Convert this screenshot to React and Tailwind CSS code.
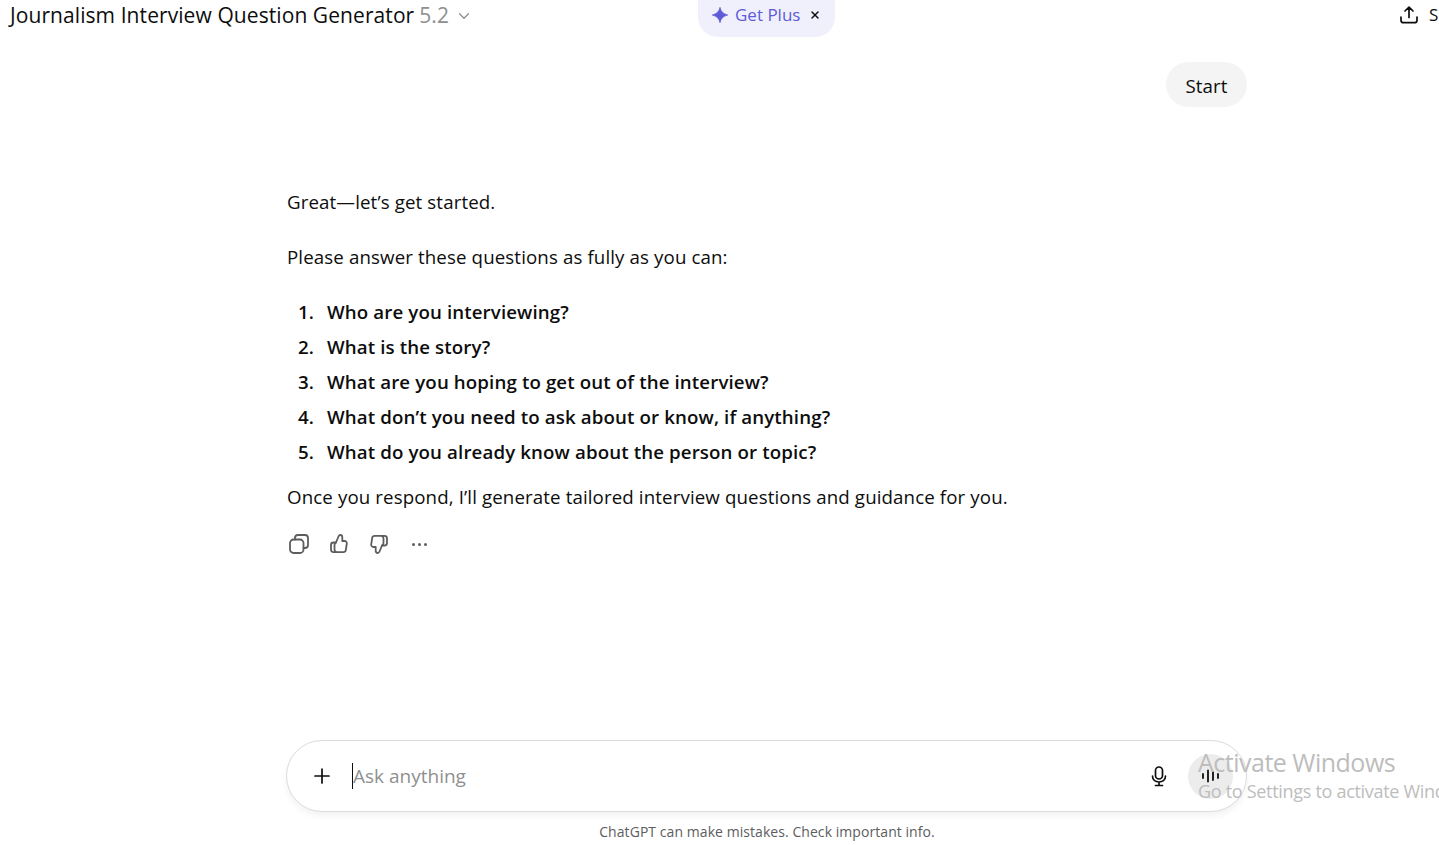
import React from "react";
import { Plus, ChevronDown, X } from "lucide-react";

const fontStack = "font-['Open_Sans',sans-serif]";

const questions = [
  "Who are you interviewing?",
  "What is the story?",
  "What are you hoping to get out of the interview?",
  "What don’t you need to ask about or know, if anything?",
  "What do you already know about the person or topic?",
];

const ActionIcon = ({ children }) => (
  <button className="w-10 h-6 flex items-center justify-center text-[#5d5d5d]">
    <svg width="22" height="22" viewBox="0 0 22 22" fill="none" stroke="currentColor" strokeWidth="1.8" strokeLinecap="round" strokeLinejoin="round">
      {children}
    </svg>
  </button>
);

const Header = () => (
  <header className="flex h-[37px] shrink-0 items-start">
    <div className="w-[698px] shrink-0 flex items-center h-[32px] pl-[10px] text-[21px] tracking-[0.08px] text-[#0d0d0d]">
      <span>Journalism Interview Question Generator</span>
      <span className="ml-[5px] text-[#8f8f8f]">5.2</span>
      <ChevronDown size={18} strokeWidth={1.7} className="ml-[6px] text-[#8f8f8f]" />
    </div>
    <div className="w-[137px] h-[37px] shrink-0 flex items-center pb-[7px] pl-[14px] rounded-b-[20px] bg-[#f0f0fc]">
      <svg width="16" height="16" viewBox="0 0 18 18" fill="#5d5bd6">
        <path d="M9 .5c.8 4.200 3 6.800 8.500 8.500C12 10.700 9.800 13.300 9 17.500 8.200 13.300 6 10.700.5 9 6 7.300 8.200 4.700 9 .5z" stroke="#5d5bd6" strokeWidth="1" strokeLinejoin="round" />
      </svg>
      <span className="ml-[7px] text-[17px] font-medium text-[#5d5bd6]">Get Plus</span>
      <X size={12} strokeWidth={3} className="ml-[9px] text-[#0d0d0d]" />
    </div>
    <div className="flex-1 flex items-center justify-end h-[30px] overflow-hidden">
      <svg width="20" height="20" viewBox="0 0 20 20" fill="none" stroke="#0d0d0d" strokeWidth="1.7" strokeLinecap="round" strokeLinejoin="round" className="shrink-0">
        <path d="M10 12.500V2.500M6 6l4-3.800L14 6" />
        <path d="M2 12v3.200c0 1.500 1 2.500 2.500 2.500h11c1.500 0 2.500-1 2.500-2.500V12" />
      </svg>
      <span className="ml-[10px] w-[10px] shrink-0 overflow-hidden text-[17px] font-medium text-[#0d0d0d]">S</span>
    </div>
  </header>
);

const Composer = () => (
  <div className="-ml-px w-[961px] h-[72px] flex items-center rounded-[36px] border border-[#dcdcdc] bg-white shadow-[0_4px_6px_rgba(0,0,0,0.05)] pl-[23px] pr-[13px]">
    <Plus size={24} strokeWidth={1.7} className="text-[#0d0d0d]" />
    <div className="ml-[18px] w-px h-[26px] bg-[#0d0d0d]" />
    <span className="text-[19px] text-[#8f8f8f]">Ask anything</span>
    <svg width="22" height="22" viewBox="0 0 22 22" fill="none" stroke="#0d0d0d" strokeWidth="1.7" strokeLinecap="round" className="ml-auto">
      <rect x="7.500" y="2" width="7" height="12" rx="3.500" />
      <path d="M4.500 11c0 3.800 2.800 6 6.500 6s6.500-2.200 6.500-6M11 17v3M7.500 20.500h7" />
    </svg>
    <div className="ml-[18px] w-[45px] h-[45px] rounded-full bg-[#ececec] flex items-center justify-center">
      <svg width="22" height="22" viewBox="0 0 22 22" fill="none" stroke="#0d0d0d" strokeWidth="1.8" strokeLinecap="round">
        <path d="M3 9v4M8 5.500v11M13 7v8M18 9v4" />
      </svg>
    </div>
  </div>
);

export default function App() {
  return (
    <div className={`relative w-[1439px] h-[845px] overflow-hidden bg-white flex flex-col ${fontStack}`}>
      <Header />
      <main className="flex-1 w-[960px] ml-[287px] text-[18.7px] tracking-[0.12px] leading-[35px] text-[#0d0d0d]">
        <div className="flex justify-end pt-[25px]">
          <div className="w-[81px] h-[45px] pt-[2px] flex items-center justify-center rounded-[24px] bg-[#f4f4f4]">Start</div>
        </div>
        <p className="mt-[77px]">Great—let’s get started.</p>
        <p className="mt-[20px]">Please answer these questions as fully as you can:</p>
        <ol className="mt-[20px]">
          {questions.map((q, i) => (
            <li key={q} className="flex font-semibold">
              <span className="w-[40px] shrink-0 pr-[13px] text-right">{i + 1}.</span>
              <span>{q}</span>
            </li>
          ))}
        </ol>
        <p className="mt-[10px]">Once you respond, I’ll generate tailored interview questions and guidance for you.</p>
        <div className="flex mt-[18px] -ml-[8px]">
          <ActionIcon>
            <rect x="2" y="6.500" width="13.500" height="13.500" rx="3.500" />
            <path d="M7 6.500V5c0-1.700 1.300-3 3-3h7c1.700 0 3 1.300 3 3v7c0 1.700-1.300 3-3 3h-1.500" />
          </ActionIcon>
          <ActionIcon>
            <path d="M8 9.500l2.500-6c.4-1 1-1.500 1.800-1.500 1.200 0 2 1 2 2.200V8h2.200c1.500 0 2.500 1.200 2.300 2.600l-1 6.500c-.2 1.200-1.200 2-2.400 2H8" />
            <path d="M8 9.500H5.500C4 9.500 3 10.600 3 12v4.600c0 1.400 1 2.500 2.500 2.500H8c-1-.7-1.500-1.500-1.500-2.500V12c0-1 .5-1.800 1.500-2.500z" />
          </ActionIcon>
          <ActionIcon>
            <path d="M14 12.500l-2.500 6c-.4 1-1 1.500-1.800 1.500-1.200 0-2-1-2-2.200V14H5.500C4 14 3 12.800 3.200 11.400l1-6.500c.2-1.200 1.200-2 2.400-2H14" />
            <path d="M14 12.500h2.500c1.500 0 2.500-1.100 2.500-2.500V5.400c0-1.400-1-2.500-2.500-2.500H14c1 .7 1.500 1.500 1.500 2.500V10c0 1-.5 1.800-1.500 2.500z" />
          </ActionIcon>
          <button className="w-10 h-6 flex items-center justify-center gap-[3px]">
            <span className="w-[3px] h-[3px] rounded-full bg-[#5d5d5d]" />
            <span className="w-[3px] h-[3px] rounded-full bg-[#5d5d5d]" />
            <span className="w-[3px] h-[3px] rounded-full bg-[#5d5d5d]" />
          </button>
        </div>
      </main>
      <footer className="w-[960px] ml-[287px] pb-[1px] shrink-0 flex flex-col items-center">
        <Composer />
        <p className="mt-[9px] h-[23px] text-[14px] tracking-[0.06px] text-[#5d5d5d]">ChatGPT can make mistakes. Check important info.</p>
      </footer>
      {/* windows watermark sits over everything */}
      <div className="absolute left-[1198px] top-[746px] whitespace-nowrap text-[#bdbdbd] pointer-events-none">
        <div className="text-[25px] leading-[33px] tracking-[-0.5px]">Activate Windows</div>
        <div className="text-[18px] leading-[24px] tracking-[-0.3px]">Go to Settings to activate Windows.</div>
      </div>
    </div>
  );
}
